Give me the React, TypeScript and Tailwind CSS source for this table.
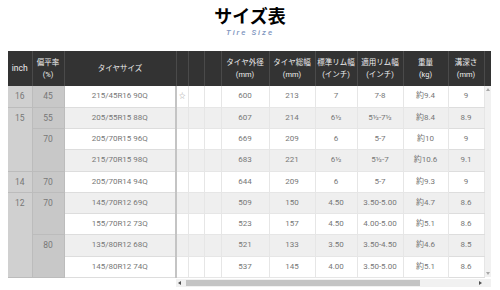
import React from 'react';

type Row = {
  inch?: [string, number];
  ratio?: [string, number];
  size: string;
  star?: boolean;
  vals: string[];
};

const rows: Row[] = [
  { inch: ['16', 1], ratio: ['45', 1], size: '215/45R16 90Q', star: true, vals: ['600', '213', '7', '7-8', '約9.4', '9'] },
  { inch: ['15', 3], ratio: ['55', 1], size: '205/55R15 88Q', vals: ['607', '214', '6½', '5½-7½', '約8.4', '8.9'] },
  { ratio: ['70', 2], size: '205/70R15 96Q', vals: ['669', '209', '6', '5-7', '約10', '9'] },
  { size: '215/70R15 98Q', vals: ['683', '221', '6½', '5½-7', '約10.6', '9.1'] },
  { inch: ['14', 1], ratio: ['70', 1], size: '205/70R14 94Q', vals: ['644', '209', '6', '5-7', '約9.3', '9'] },
  { inch: ['12', 4], ratio: ['70', 2], size: '145/70R12 69Q', vals: ['509', '150', '4.50', '3.50-5.00', '約4.7', '8.6'] },
  { size: '155/70R12 73Q', vals: ['523', '157', '4.50', '4.00-5.00', '約5.1', '8.6'] },
  { ratio: ['80', 2], size: '135/80R12 68Q', vals: ['521', '133', '3.50', '3.50-4.50', '約4.6', '8.5'] },
  { size: '145/80R12 74Q', vals: ['537', '145', '4.00', '3.50-5.00', '約5.1', '8.6'] },
];

const headers: React.ReactNode[] = [
  <>タイヤ外径<br />(mm)</>,
  <>タイヤ総幅<br />(mm)</>,
  <>標準リム幅<br />(インチ)</>,
  <>適用リム幅<br />(インチ)</>,
  <>重量<br />(kg)</>,
  <>溝深さ<br />(mm)</>,
];

const widths = [24, 32, 112, 12, 16, 17, 48, 46, 42, 46, 45, 36, 7];

function UpArrow() {
  return <div className="w-0 h-0 border-l-[2px] border-r-[2px] border-b-[3px] border-l-transparent border-r-transparent border-b-[#a8a8a8]" />;
}

function DownArrow() {
  return <div className="w-0 h-0 border-l-[2px] border-r-[2px] border-t-[3px] border-l-transparent border-r-transparent border-t-[#a8a8a8]" />;
}

export default function App() {
  return (
    <div className="w-[500px] h-[290px] overflow-hidden bg-white font-['Roboto','Noto_Sans_CJK_JP',sans-serif]">
      {/* TITLE */}
      <div className="h-[51px] flex flex-col items-center">
        <h1 className="pt-[6px] text-[18px] leading-[18px] font-bold text-black font-['Noto_Sans_CJK_JP',sans-serif]">
          サイズ表
        </h1>
        <p className="mt-[4px] text-[8px] leading-[9px] italic font-medium tracking-[2px] text-[#7f96c0]">
          Tire Size
        </p>
      </div>

      {/* TABLE */}
      <div className="ml-2">
        <table className="table-fixed border-collapse w-[483px] text-center">
          <colgroup>
            {widths.map((w, i) => (
              <col key={i} style={{ width: w }} />
            ))}
          </colgroup>
          <thead>
            <tr className="h-[35px] bg-[#333333] text-[#eeeeee] text-[7.5px] leading-[11.5px]">
              <th className="font-normal text-[8.5px] border-r border-[#4a4a4a]">inch</th>
              <th className="font-normal border-r border-[#4a4a4a]">偏平率<br />(%)</th>
              <th className="font-normal border-r border-[#4a4a4a]">タイヤサイズ</th>
              <th className="border-r border-[#4a4a4a]" />
              <th className="border-r border-[#4a4a4a]" />
              <th className="border-r border-[#4a4a4a]" />
              {headers.map((h, i) => (
                <th key={i} className="font-normal border-r border-[#4a4a4a]">{h}</th>
              ))}
              <th />
            </tr>
          </thead>
          <tbody className="text-[8px] text-[#777777]">
            {rows.map((r, i) => {
              const bg = i % 2 === 0 ? 'bg-white' : 'bg-[#efefef]';
              return (
                <tr key={i} className="h-[21.25px]">
                  {r.inch && (
                    <td rowSpan={r.inch[1]} className="bg-[#d0d0d0] border-b border-r border-[#bcbcbc] align-top leading-[20px] text-[8.5px]">
                      {r.inch[0]}
                    </td>
                  )}
                  {r.ratio && (
                    <td rowSpan={r.ratio[1]} className="bg-[#c8c8c8] border-b border-r border-[#bcbcbc] align-top leading-[20px] text-[8.5px]">
                      {r.ratio[0]}
                    </td>
                  )}
                  <td className={`${bg} border-b border-[#dddddd] border-r-2 border-r-[#c4c4c4]`}>{r.size}</td>
                  <td className={`${bg} border-b border-r border-[#e6e6e6] text-left pl-[2px] text-[6.5px] text-[#999999]`}>
                    {r.star ? '☆' : ''}
                  </td>
                  <td className={`${bg} border-b border-r border-[#e6e6e6]`} />
                  <td className={`${bg} border-b border-r border-[#e6e6e6]`} />
                  {r.vals.map((v, j) => (
                    <td key={j} className={`${bg} border-b border-r border-[#e6e6e6] ${j === 5 ? 'border-b-[#dddddd]' : ''}`}>
                      {v}
                    </td>
                  ))}
                  {i === 0 && (
                    <td rowSpan={9} className="bg-[#f1f1f1] p-0 align-top">
                      <div className="h-[191px] flex flex-col items-center justify-between py-[2px]">
                        <UpArrow />
                        <DownArrow />
                      </div>
                    </td>
                  )}
                </tr>
              );
            })}
          </tbody>
        </table>

        {/* HORIZONTAL SCROLLBAR */}
        <div className="ml-[168px] mt-[1px] flex w-[315px] h-[8px]">
          <div className="flex-1 bg-[#f1f1f1] flex items-center px-[2px]">
            <div className="w-0 h-0 border-t-[2px] border-b-[2px] border-r-[3px] border-t-transparent border-b-transparent border-r-[#505050]" />
            <div className="ml-[5px] w-[234px] h-[6px] bg-[#c4c4c4]" />
            <div className="flex-1" />
            <div className="w-0 h-0 border-t-[2px] border-b-[2px] border-l-[3px] border-t-transparent border-b-transparent border-l-[#505050]" />
          </div>
          <div className="w-[7px] bg-[#f1f1f1]" />
        </div>
      </div>
    </div>
  );
}
